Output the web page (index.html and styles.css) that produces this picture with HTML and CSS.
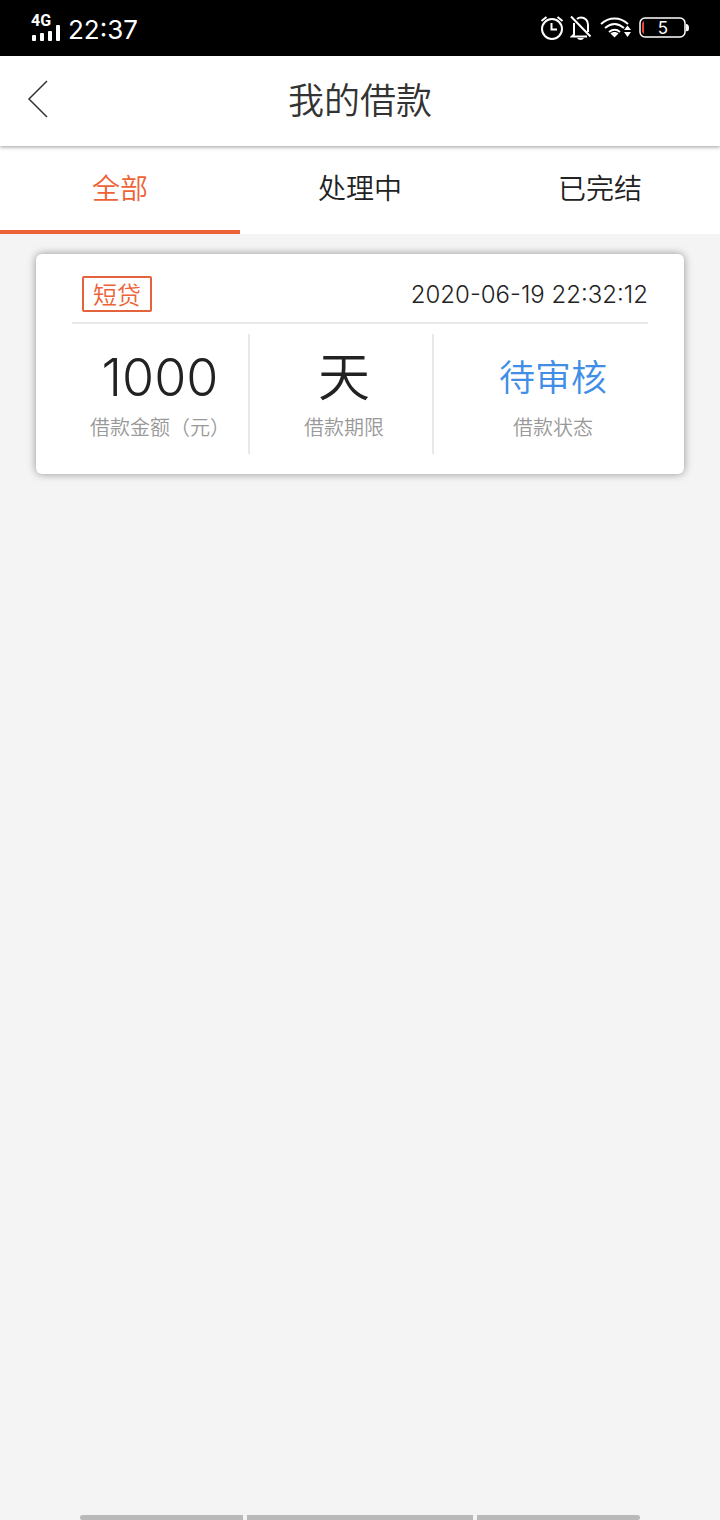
FILE: index.html
```
<!DOCTYPE html>
<html lang="zh-CN">
<head>
    <meta charset="UTF-8">
    <meta name="viewport" content="width=device-width, initial-scale=1.0">
    <title>我的借款</title>
    <link rel="stylesheet" href="styles.css">
</head>
<body>
    <div class="status-bar">
        <div class="status-left">
            <div class="network">
                <span class="network-type">4G</span>
                <svg class="signal" width="30" height="16" viewBox="0 0 30 16" fill="#fff">
                    <rect x="2" y="10" width="4" height="6" rx="1"/>
                    <rect x="10" y="8" width="4" height="8" rx="1"/>
                    <rect x="18" y="6" width="4" height="10" rx="1"/>
                    <rect x="26" y="0" width="4" height="16" rx="1"/>
                </svg>
            </div>
            <span class="time">22:37</span>
        </div>
        <div class="status-right">
            <svg width="24" height="26" viewBox="0 0 24 26" fill="none" stroke="#fff" stroke-width="2">
                <circle cx="12" cy="14" r="10"/>
                <path d="M11.5 8v6.5H17M1.5 6L6.5 2M22.5 6l-5-4"/>
            </svg>
            <svg class="bell" width="22" height="26" viewBox="0 0 22 26" fill="none" stroke="#fff" stroke-width="2">
                <path d="M7 4C8 3 9.500 2.500 11 2.500c4 0 7 3 7 7V17M4 8v11.500L2 21.500h15M1 1.500l19.500 20"/>
                <path d="M7 23h7c-1 2.500-6 2.500-7 0z" fill="#fff" stroke="none"/>
            </svg>
            <svg class="wifi" width="31" height="24" viewBox="0 0 31 24" fill="none" stroke="#fff" stroke-width="2">
                <path d="M1 8c8-7.500 19-7.500 27 0M5 12c6-5 13-5 19 0M9 16c4-3 7.500-3 11 0"/>
                <path d="M10.500 17.500c2-2 6-2 8 0L14.500 21.500zM24 14l3.500-4.500L31 14zM24 16h7l-3.500 5z" fill="#fff" stroke="#000" stroke-width="1" paint-order="stroke"/>
            </svg>
            <svg class="battery" width="50" height="22" viewBox="0 0 50 22">
                <rect x="1" y="1" width="45" height="19" rx="5" fill="none" stroke="#fff" stroke-width="1.500"/>
                <path d="M47 7q3 0 3 4t-3 3z" fill="#fff"/>
                <path d="M5 4v13q-2-1-2-3V7q0-2 2-3z" fill="#f0443a"/>
                <text class="battery-level" x="24" y="17" text-anchor="middle" fill="#fff">5</text>
            </svg>
        </div>
    </div>

    <header class="header">
        <button class="back" type="button" aria-label="返回">
            <svg width="22" height="38" viewBox="0 0 22 38" fill="none" stroke="#333" stroke-width="1.500">
                <path d="M20 1L2 19l18 18"/>
            </svg>
        </button>
        <h1>我的借款</h1>
    </header>

    <nav class="tabs">
        <a href="#all" class="tab active">全部</a>
        <a href="#processing" class="tab">处理中</a>
        <a href="#finished" class="tab">已完结</a>
    </nav>

    <main class="list">
        <div class="card">
            <div class="card-top">
                <span class="tag">短贷</span>
                <span class="date">2020-06-19 22:32:12</span>
            </div>
            <div class="card-info">
                <div class="info amount">
                    <div class="value">1000</div>
                    <div class="label">借款金额（元）</div>
                </div>
                <div class="info term">
                    <div class="value">天</div>
                    <div class="label">借款期限</div>
                </div>
                <div class="info state">
                    <div class="value">待审核</div>
                    <div class="label">借款状态</div>
                </div>
            </div>
        </div>
    </main>

    <div class="gesture-bar">
        <span></span>
        <span></span>
        <span></span>
    </div>
</body>
</html>
```

FILE: styles.css
```
* {
    box-sizing: border-box;
}
body {
    margin: 0;
    min-height: 100vh;
    display: flex;
    flex-direction: column;
    background: #f4f4f4;
    color: #222;
    font-family: Inter, "Noto Sans CJK SC", sans-serif;
    font-weight: 350;
}
.status-bar {
    display: flex;
    justify-content: space-between;
    align-items: center;
    height: 56px;
    padding: 0 31px 0 30px;
    background: #000;
    color: #fff;
}
.status-left, .status-right {
    display: flex;
    align-items: center;
}
.status-left {
    gap: 8px;
}
.network {
    display: flex;
    flex-direction: column;
    height: 26px;
    justify-content: space-between;
}
.network-type {
    height: 10px;
    padding-left: 1px;
    font-family: Roboto, sans-serif;
    font-size: 16px;
    font-weight: 700;
    line-height: 12px;
}
.time {
    padding-top: 3px;
    font-size: 26px;
    font-weight: 400;
    line-height: 32px;
}
.bell {
    margin-left: 6px;
}
.wifi {
    margin-left: 8px;
}
.battery {
    margin-left: 8px;
}
.battery-level {
    font-size: 17px;
    font-weight: 400;
}
.header {
    display: grid;
    grid-template-columns: 80px 1fr 80px;
    align-items: center;
    height: 90px;
    background: #fff;
    box-shadow: 0 1px 4px rgba(0, 0, 0, 0.4);
    z-index: 1;
}
.header h1 {
    margin: 0;
    color: #333;
    font-size: 36px;
    font-weight: 350;
    line-height: 52px;
    text-align: center;
}
.back {
    display: flex;
    padding: 0 0 4px 27px;
    border: none;
    background: none;
    cursor: pointer;
}
.tabs {
    display: flex;
    height: 88px;
    background: #fff;
}
.tab {
    flex: 1;
    padding-top: 2px;
    border-bottom: 4px solid transparent;
    color: #222;
    font-size: 28px;
    line-height: 82px;
    text-align: center;
    text-decoration: none;
}
.tab.active {
    border-color: #ee6237;
    color: #ee6237;
}
.list {
    flex: 1;
    padding: 20px 36px;
}
.card {
    padding: 20px 36px;
    border-radius: 6px;
    background: #fff;
    box-shadow: 0 0 8px rgba(0, 0, 0, 0.4);
}
.card-top {
    display: flex;
    justify-content: space-between;
    align-items: center;
    height: 50px;
    padding: 0 0 8px 10px;
    border-bottom: 2px solid #e8e8e8;
}
.tag {
    padding: 4px 9px 0;
    border: 2px solid #e4623c;
    border-radius: 2px;
    color: #ee6237;
    font-size: 24px;
    line-height: 28px;
}
.date {
    padding-top: 2px;
    font-size: 24px;
    line-height: 36px;
}
.card-info {
    display: grid;
    grid-template-columns: 178fr 184fr 214fr;
    margin-top: 10px;
}
.info {
    height: 120px;
    padding-top: 10px;
    text-align: center;
}
.amount, .term {
    border-right: 2px solid #e8e8e8;
}
.term {
    padding-left: 6px;
}
.state {
    padding-left: 24px;
}
.value {
    font-size: 52px;
    line-height: 68px;
}
.state .value {
    color: #408ee6;
    font-size: 36px;
}
.label {
    color: #999;
    font-size: 20px;
    line-height: 32px;
    white-space: nowrap;
}
.gesture-bar {
    display: grid;
    grid-template-columns: 163fr 226fr 163fr;
    gap: 4px;
    padding: 0 80px;
}
.gesture-bar span {
    height: 5px;
    background: #b9b9b9;
}
.gesture-bar span:first-child {
    border-radius: 3px 0 0 3px;
}
.gesture-bar span:last-child {
    border-radius: 0 3px 3px 0;
}
```
